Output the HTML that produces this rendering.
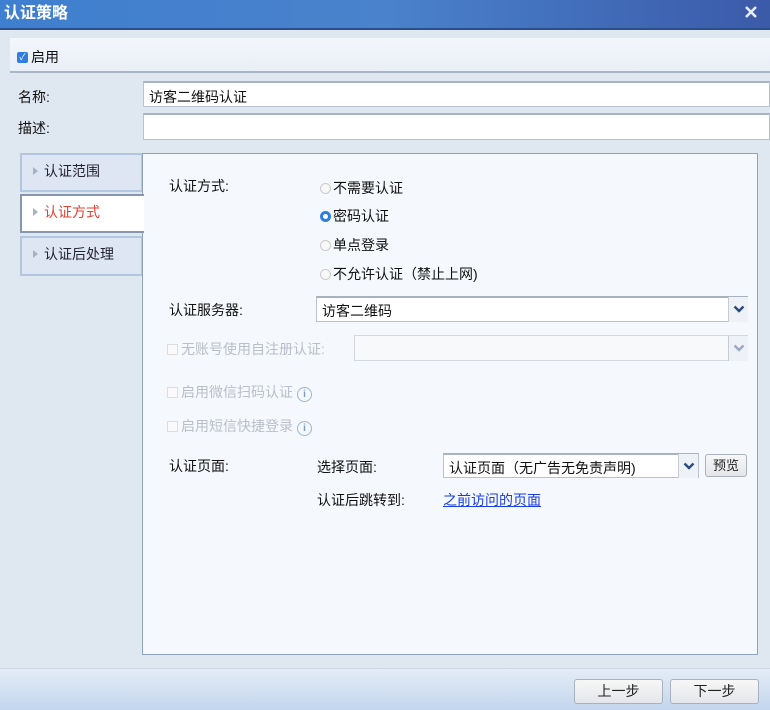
<!DOCTYPE html>
<html><head><meta charset="utf-8"><style>
*{margin:0;padding:0;box-sizing:border-box}
body{width:770px;height:710px;position:relative;overflow:hidden;background:#dfe7f1;font-family:"Liberation Sans","Noto Sans CJK SC",sans-serif;font-size:14px;color:#111}
.a{position:absolute;white-space:nowrap}
.title{left:0;top:0;width:770px;height:30px;background:linear-gradient(90deg,#3f7fcf,#4a82cc 50%,#3b5aa8);border-bottom:2px solid #2b4f8a;color:#fff;font-weight:bold;font-size:16px;line-height:28px;padding-left:4px}
.inp{background:#fff;border:1px solid #b9c2cf;border-top:2px solid #a9b2c0}
.tab{left:20px;width:123px;background:#dde6f2;border:2px solid #b2c6df;color:#223;padding-left:22px;line-height:32px}
.tab:before{content:"";position:absolute;left:11px;top:12px;border-left:5px solid #a6b2c2;border-top:4px solid transparent;border-bottom:4px solid transparent}
.radio{width:11px;height:11px;border-radius:50%;border:1px solid #ccc;background:#f8f8f8;display:inline-block;vertical-align:-1px;margin-right:2px}
.cb{width:11px;height:11px;border:1px solid #ddd;background:#fafafa;display:inline-block;vertical-align:-1px;margin-right:3px}
.dis{color:#b9bfc8}
.info{display:inline-block;width:15px;height:15px;border-radius:50%;border:1px solid #9cb6d6;color:#7c9cc8;font-size:10px;line-height:13px;text-align:center;font-weight:bold;vertical-align:0;margin-left:4px}
.arr{background:#eef1f5;border-left:1px solid #c5ccd6}
.arr svg{position:absolute;left:4px;top:8px}
.btn{border:1px solid #a9b1bc;border-radius:3px;background:linear-gradient(#f7f7f7,#e4e6ea);text-align:center;color:#222}
</style></head><body>
<div class="a title">认证策略</div>
<svg class="a" style="left:745px;top:6px" width="12" height="12"><path d="M1 1L11 11M11 1L1 11" stroke="#e6ecf7" stroke-width="2.6"/></svg>
<div class="a" style="left:10px;top:38px;width:760px;height:35px;background:linear-gradient(#f3f6fb,#e9eff8);border-bottom:2px solid #a8b6c8"></div>
<div class="a" style="left:17px;top:52px;width:11px;height:11px;background:#2f7de1;border-radius:2px;color:#fff;font-size:9px;line-height:11px;text-align:center">✓</div>
<div class="a" style="left:31px;top:47px">启用</div>
<div class="a" style="left:18px;top:87px">名称:</div>
<div class="a inp" style="left:143px;top:81px;width:627px;height:26px;padding:4px 0 0 5px">访客二维码认证</div>
<div class="a" style="left:18px;top:118px">描述:</div>
<div class="a inp" style="left:143px;top:113px;width:627px;height:27px"></div>
<div class="a tab" style="top:153px;height:39px">认证范围</div>
<div class="a tab" style="top:194px;height:39px;background:#fff;border-color:#8797ad;color:#e8402e;width:124px;border-right:none;z-index:2">认证方式</div>
<div class="a tab" style="top:236px;height:40px">认证后处理</div>
<div class="a" style="left:142px;top:153px;width:616px;height:502px;background:#f5f8fc;border:1px solid #8fa3bd"></div>
<div class="a" style="left:169px;top:176px">认证方式:</div>
<div class="a" style="left:320px;top:178px"><span class="radio"></span>不需要认证</div>
<div class="a" style="left:320px;top:206px"><span class="radio" style="background:#fff;border:3px solid #2f7de1"></span>密码认证</div>
<div class="a" style="left:320px;top:235px"><span class="radio"></span>单点登录</div>
<div class="a" style="left:320px;top:264px"><span class="radio"></span>不允许认证（禁止上网)</div>
<div class="a" style="left:169px;top:300px">认证服务器:</div>
<div class="a inp" style="left:316px;top:296px;width:432px;height:26px;padding:3px 0 0 5px">访客二维码</div>
<div class="a arr" style="left:728px;top:297px;width:20px;height:25px"><svg width="12" height="8"><path d="M1.5 1.5L6 6L10.5 1.5" stroke="#2a4a80" stroke-width="2.4" fill="none"/></svg></div>
<div class="a dis" style="left:167px;top:339px"><span class="cb"></span>无账号使用自注册认证:</div>
<div class="a" style="left:354px;top:335px;width:394px;height:26px;background:#f8f9fb;border:1px solid #d3d8df"></div>
<div class="a arr" style="left:728px;top:336px;width:20px;height:25px"><svg width="12" height="8"><path d="M1.5 1.5L6 6L10.5 1.5" stroke="#9aaac0" stroke-width="2.4" fill="none"/></svg></div>
<div class="a dis" style="left:167px;top:382px"><span class="cb"></span>启用微信扫码认证<span class="info">i</span></div>
<div class="a dis" style="left:167px;top:416px"><span class="cb"></span>启用短信快捷登录<span class="info">i</span></div>
<div class="a" style="left:169px;top:456px">认证页面:</div>
<div class="a" style="left:317px;top:457px">选择页面:</div>
<div class="a inp" style="left:443px;top:453px;width:256px;height:25px;padding:3px 0 0 5px">认证页面（无广告无免责声明)</div>
<div class="a arr" style="left:678px;top:454px;width:20px;height:24px"><svg width="12" height="8"><path d="M1.5 1.5L6 6L10.5 1.5" stroke="#2a4a80" stroke-width="2.4" fill="none"/></svg></div>
<div class="a btn" style="left:705px;top:454px;width:42px;height:23px;line-height:21px;font-size:13px">预览</div>
<div class="a" style="left:317px;top:490px">认证后跳转到:</div>
<div class="a" style="left:443px;top:490px;color:#1a3ee6;text-decoration:underline">之前访问的页面</div>
<div class="a" style="left:0;top:668px;width:770px;height:42px;background:linear-gradient(#e4ecf6,#c3d6ee);border-top:1px solid #cdd8e6"></div>
<div class="a btn" style="left:574px;top:679px;width:89px;height:25px;line-height:23px">上一步</div>
<div class="a btn" style="left:670px;top:679px;width:89px;height:25px;line-height:23px">下一步</div>
</body></html>
